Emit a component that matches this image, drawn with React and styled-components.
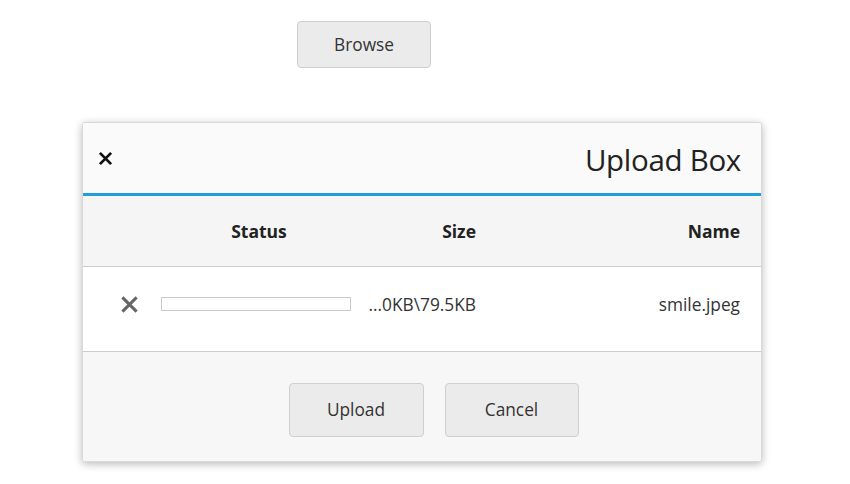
import React from 'react';
import styled, { createGlobalStyle } from 'styled-components';

const Global = createGlobalStyle`
  html, body { margin: 0; padding: 0; background: #fff; }
  body { font-family: "Open Sans", "Noto Sans", sans-serif; color: #333; }
`;

const Page = styled.div`
  width: 850px;
  height: 484px;
  display: flex;
  flex-direction: column;
  align-items: flex-start;
`;

const Button = styled.button`
  width: ${({ w }) => w || 134}px;
  height: ${({ h }) => h || 47}px;
  background: #ebebeb;
  border: 1px solid #cfcfcf;
  border-radius: 4px;
  font-family: inherit;
  font-size: 17.3px;
  color: #333;
  padding: 0;
  cursor: pointer;
`;

const BrowseWrap = styled.div`
  margin: 21px 0 0 297px;
`;

const Dialog = styled.div`
  margin: 54px 0 0 82px;
  width: 680px;
  height: 340px;
  box-sizing: border-box;
  border: 1px solid #d9d9d9;
  border-radius: 3px;
  box-shadow: 0 2px 8px rgba(0, 0, 0, 0.28);
  display: flex;
  flex-direction: column;
  overflow: hidden;
  background: #fff;
`;

const Header = styled.div`
  height: 70px;
  background: #fafafa;
  border-bottom: 3px solid #1e9fd9;
  display: flex;
  align-items: center;
  justify-content: space-between;
  padding: 0 20px 0 15px;
`;

const Title = styled.h1`
  margin: 3px 0 0;
  font-weight: 400;
  font-size: 29.5px;
  color: #222;
  letter-spacing: -0.3px;
`;

const IconBtn = styled.span`
  display: flex;
  align-items: center;
  justify-content: center;
  margin-top: 1px;
`;

const Grid = styled.div`
  display: grid;
  grid-template-columns: 50px 210px 112px 1fr;
  align-items: center;
  padding: 0 21px 0 21px;
  height: ${({ h }) => h}px;
  background: ${({ bg }) => bg};
  border-bottom: 1px solid #cccccc;
`;

const HeadCell = styled.div`
  font-weight: 700;
  font-size: 17.5px;
  color: #222;
  text-align: ${({ align }) => align};
  margin-top: 0;
`;

const Cell = styled.div`
  font-size: 17.3px;
  color: #333;
  display: flex;
  justify-content: ${({ justify }) => justify || 'flex-start'};
  margin-top: -10px;
  white-space: nowrap;
`;

const Progress = styled.div`
  width: 188px;
  height: 12px;
  border: 1px solid #cbcbcb;
  background: #fff;
  margin-left: 7px;
  margin-top: -1px;
`;

const Footer = styled.div`
  flex: 1;
  background: #f7f7f7;
  display: flex;
  justify-content: center;
  align-items: center;
  gap: 21px;
  padding: 6px 0 0 23px;
`;

const Cross = ({ size, color, width }) => (
  <svg width={size} height={size} viewBox="0 0 16 16">
    <path d="M2 2 L14 14 M14 2 L2 14" stroke={color} strokeWidth={width} strokeLinecap="butt" fill="none" />
  </svg>
);

export default function App() {
  return (
    <Page>
      <Global />
      <BrowseWrap>
        <Button>Browse</Button>
      </BrowseWrap>
      <Dialog>
        <Header>
          <IconBtn>
            <Cross size={15} color="#111" width={3} />
          </IconBtn>
          <Title>Upload Box</Title>
        </Header>
        <Grid h={70} bg="#f5f5f5">
          <div />
          <HeadCell align="center">Status</HeadCell>
          <HeadCell align="right">Size</HeadCell>
          <HeadCell align="right">Name</HeadCell>
        </Grid>
        <Grid h={84} bg="#fff">
          <Cell justify="center">
            <Cross size={19} color="#666" width={2.6} />
          </Cell>
          <Cell>
            <Progress />
          </Cell>
          <Cell justify="flex-end">...0KB\79.5KB</Cell>
          <Cell justify="flex-end">smile.jpeg</Cell>
        </Grid>
        <Footer>
          <Button w={135} h={54}>Upload</Button>
          <Button w={134} h={54}>Cancel</Button>
        </Footer>
      </Dialog>
    </Page>
  );
}
